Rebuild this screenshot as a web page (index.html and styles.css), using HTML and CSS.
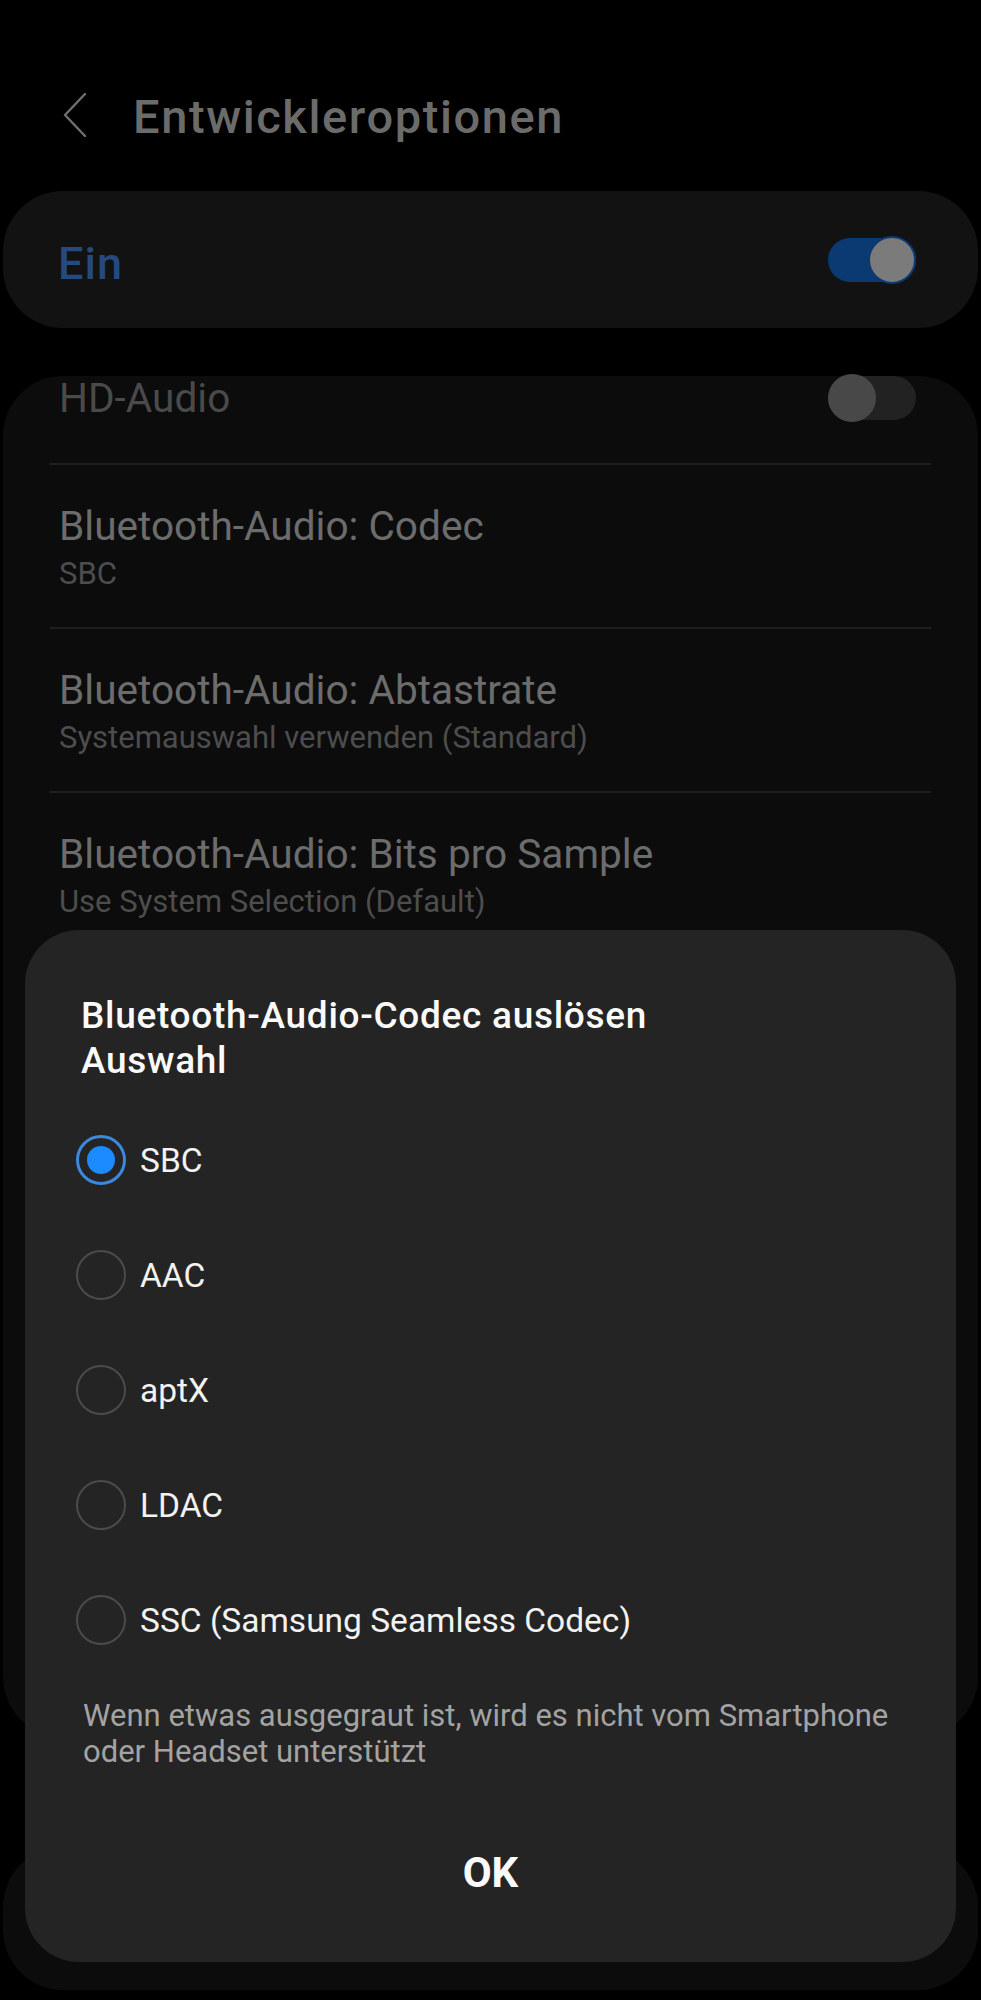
FILE: index.html
```html
<!DOCTYPE html>
<html lang="de">
<head>
<meta charset="utf-8">
<title>Entwickleroptionen</title>
<link rel="stylesheet" href="styles.css">
</head>
<body>
<div class="screen">
  <header class="appbar">
    <svg class="back" width="24" height="44" viewBox="0 0 24 44" aria-hidden="true">
      <polyline points="22,1 2,22 22,43" fill="none" stroke="#707070" stroke-width="2.4" stroke-linecap="round" stroke-linejoin="round"/>
    </svg>
    <h1 class="title">Entwickleroptionen</h1>
  </header>

  <section class="master card">
    <span class="master-label">Ein</span>
    <span class="switch on"><span class="thumb"></span></span>
  </section>

  <section class="list card">
    <div class="row row-first">
      <span class="row-title disabled">HD-Audio</span>
      <span class="switch off"><span class="thumb"></span></span>
    </div>
    <div class="divider"></div>
    <div class="row">
      <div class="row-title">Bluetooth-Audio: Codec</div>
      <div class="row-sub">SBC</div>
    </div>
    <div class="divider"></div>
    <div class="row">
      <div class="row-title">Bluetooth-Audio: Abtastrate</div>
      <div class="row-sub">Systemauswahl verwenden (Standard)</div>
    </div>
    <div class="divider"></div>
    <div class="row">
      <div class="row-title">Bluetooth-Audio: Bits pro Sample</div>
      <div class="row-sub">Use System Selection (Default)</div>
    </div>
  </section>

  <section class="tail card"></section>

  <div class="dialog" role="dialog">
    <h2 class="dialog-title">Bluetooth-Audio-Codec auslösen<br>Auswahl</h2>
    <ul class="options">
      <li class="option"><span class="radio checked"></span><span class="opt-label">SBC</span></li>
      <li class="option"><span class="radio"></span><span class="opt-label">AAC</span></li>
      <li class="option"><span class="radio"></span><span class="opt-label">aptX</span></li>
      <li class="option"><span class="radio"></span><span class="opt-label">LDAC</span></li>
      <li class="option"><span class="radio"></span><span class="opt-label">SSC (Samsung Seamless Codec)</span></li>
    </ul>
    <p class="note">Wenn etwas ausgegraut ist, wird es nicht vom Smartphone oder Headset unterstützt</p>
    <div class="actions"><span class="ok">OK</span></div>
  </div>
</div>
</body>
</html>
```
FILE: styles.css
```css
* { box-sizing: border-box; }
html, body { margin: 0; padding: 0; background: #000; }
body { font-family: Roboto, "Noto Sans", "Liberation Sans", sans-serif; }

.screen {
  width: 981px;
  height: 2000px;
  position: relative;
  overflow: hidden;
  background: #000;
}

/* header */
.appbar {
  display: flex;
  align-items: flex-start;
  padding: 89px 0 0 63px;
  height: 145px;
}
.back { margin-top: 4px; margin-right: 46px; flex: none; }
.title {
  margin: 0;
  font-size: 47px;
  line-height: 56px;
  font-weight: 500;
  letter-spacing: 1.6px;
  color: #6b6b6b;
}

.card {
  margin: 0 3px;
  border-radius: 60px;
}

/* master switch */
.master {
  margin-top: 46px;
  height: 137px;
  background: #121212;
  display: flex;
  align-items: center;
  justify-content: space-between;
  padding: 0 62px 0 55px;
}
.master-label {
  font-size: 45px;
  line-height: 50px;
  font-weight: 500;
  letter-spacing: 1px;
  color: #244a80;
  margin-top: 8px;
}

.switch {
  position: relative;
  width: 88px;
  height: 44px;
  border-radius: 22px;
  flex: none;
}
.switch .thumb {
  position: absolute;
  top: -2px;
  width: 48px;
  height: 48px;
  border-radius: 50%;
}
.switch.on { background: #0b3a72; }
.switch.on .thumb { right: 0; background: #7b7b7b; border: 2px solid #0b3a72; }
.switch.off { background: #222; }
.switch.off .thumb { left: 0; background: #484848; }

/* list */
.list {
  display: flow-root;
  margin-top: 48px;
  height: 1361px;
  background: #0c0c0c;
}
.row { padding: 37px 58px 35px 56px; height: 162px; }
.row-first {
  height: 130px;
  margin-top: -43px;
  padding: 0 62px 0 56px;
  display: flex;
  align-items: center;
  justify-content: space-between;
}
.row-title {
  font-size: 40.6px;
  line-height: 48px;
  color: #6c6c6c;
  white-space: nowrap;
}
.row-first .row-title { line-height: 38px; }
.row-title.disabled { color: #4a4a4a; }
.row-sub {
  margin-top: 5px;
  font-size: 31px;
  line-height: 37px;
  color: #4d4d4d;
  white-space: nowrap;
}
.divider {
  height: 2px;
  margin: 0 47px 0 47px;
  background: #1f1f1f;
}

.tail {
  margin-top: 110px;
  height: 143px;
  background: #0c0c0c;
}

/* dialog */
.dialog {
  position: absolute;
  left: 25px;
  top: 930px;
  width: 931px;
  height: 1032px;
  background: #242424;
  border-radius: 54px;
  padding: 63px 56px 0 56px;
}
.dialog-title {
  margin: 0;
  font-size: 37px;
  line-height: 45px;
  font-weight: 500;
  letter-spacing: 0.7px;
  color: #fafafa;
}
.options {
  list-style: none;
  margin: 19px 0 0 -5px;
  padding: 0;
}
.option {
  height: 115px;
  display: flex;
  align-items: center;
  gap: 14px;
}
.radio {
  width: 50px;
  height: 50px;
  border-radius: 50%;
  border: 2px solid #4b4b4b;
  flex: none;
  display: flex;
  align-items: center;
  justify-content: center;
}
.radio.checked { border: 3px solid #3b88dc; }
.radio.checked::after {
  content: "";
  width: 28px;
  height: 28px;
  border-radius: 50%;
  background: #1b8bff;
}
.opt-label {
  font-size: 33.5px;
  line-height: 40px;
  color: #f2f2f2;
  margin-top: 3px;
}
.note {
  margin: 21px 0 0 2px;
  font-size: 31px;
  line-height: 36px;
  color: #a3a3a3;
}
.actions {
  margin-top: 78px;
  display: flex;
  justify-content: center;
}
.ok {
  font-size: 42px;
  line-height: 50px;
  font-weight: 700;
  color: #fafafa;
}
```
